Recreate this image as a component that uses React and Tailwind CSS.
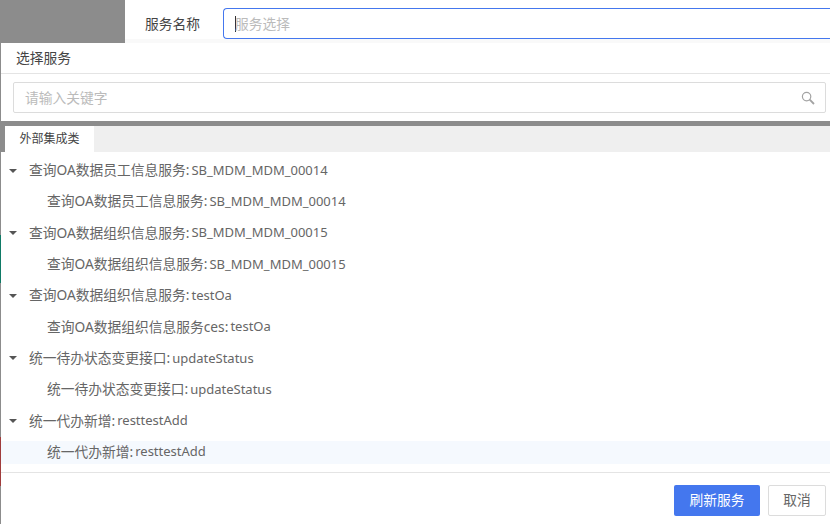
const rows = [
  { name: '查询OA数据员工信息服务:', code: 'SB_MDM_MDM_00014', parent: true },
  { name: '查询OA数据员工信息服务:', code: 'SB_MDM_MDM_00014' },
  { name: '查询OA数据组织信息服务:', code: 'SB_MDM_MDM_00015', parent: true },
  { name: '查询OA数据组织信息服务:', code: 'SB_MDM_MDM_00015' },
  { name: '查询OA数据组织信息服务:', code: 'testOa', parent: true },
  { name: '查询OA数据组织信息服务ces:', code: 'testOa' },
  { name: '统一待办状态变更接口:', code: 'updateStatus', parent: true },
  { name: '统一待办状态变更接口:', code: 'updateStatus' },
  { name: '统一代办新增:', code: 'resttestAdd', parent: true },
  { name: '统一代办新增:', code: 'resttestAdd', active: true },
]

const SearchIcon = () => (
  <svg width="14" height="14" viewBox="0 0 14 14" fill="none" stroke="#a3a3a3" strokeWidth="1.2">
    <circle cx="5.6" cy="5.6" r="4.2" />
    <path d="M8.7 8.7 13 13" strokeWidth="1.8" />
  </svg>
)

const Row = ({ name, code, parent, active }) => (
  <div className={`flex h-[23px] items-center ${parent ? 'pl-[8px]' : 'pl-[46px]'} ${active ? 'bg-[#f5f9fe]' : ''}`}>
    {parent && <span className="mr-[12px] h-0 w-0 border-x-[4px] border-t-[4px] border-x-transparent border-t-[#555]" />}
    <span>{name}</span>
    <span className="ml-[2px] text-[13px]">{code}</span>
  </div>
)

const App = () => {
  return (
    <div className="flex h-[524px] w-[830px] flex-col overflow-hidden bg-white font-['Noto_Sans','Noto_Sans_CJK_SC',sans-serif] text-[13.75px] text-[#666]">
      <div className="flex h-[43px] shrink-0">
        <div className="w-[125px] bg-[#8c8c8c]" />
        <div className="flex flex-1 items-start border-b-[4px] border-[#f9f9f9] bg-white pl-[20px] pt-[8px]">
          <label className="w-[78px] leading-[31px] text-[#444]">服务名称</label>
          <div className="flex h-[31px] flex-1 items-center rounded-l-[4px] border border-r-0 border-[#4477ee] pl-[11px] text-[#bbb]">
            <span className="mr-[-1px] h-[16px] w-px bg-[#333]" />
            <span className="pt-px">服务选择</span>
          </div>
        </div>
      </div>

      <div className="flex flex-1">
        <div className="flex w-px shrink-0 flex-col bg-[#8c8c8c]">
          <div className="mt-[192px] h-[48px] bg-[#0f7a66]" />
          <div className="mt-[154px] h-[49px] bg-[#a03c3c]" />
        </div>

        <div className="flex min-w-0 flex-1 flex-col">
          <div className="flex h-[31px] shrink-0 items-center border-b border-[#e4e4e4] pl-[15px] text-[#444]">选择服务</div>
          <div className="h-[47px] shrink-0 pl-[12px] pr-[4px] pt-[8px]">
            <div className="flex h-[31px] items-center justify-between rounded-[2px] border border-[#dcdcdc] pl-[11px] pr-[10px] text-[#bbb]">
              <span className="pt-px">请输入关键字</span>
              <SearchIcon />
            </div>
          </div>

          <div className="h-[5px] shrink-0 bg-[#8c8c8c]" />

          <div className="flex h-[26px] shrink-0 bg-[#efefef]">
            <div className="w-[4px] bg-[#8c8c8c]" />
            <div className="flex w-[89px] items-center justify-center bg-white text-[12px] text-[#444]">外部集成类</div>
          </div>

          <div className="flex h-[321px] shrink-0 flex-col gap-[8.3px] border-b border-[#e4e4e4] pt-[7px]">
            {rows.map((row, i) => (
              <Row key={i} {...row} />
            ))}
          </div>

          <div className="flex flex-1 justify-end gap-[8px] pr-[4px] pt-[12px]">
            <button className="h-[31px] w-[86px] rounded-[2px] bg-[#4477ee] text-white">刷新服务</button>
            <button className="h-[31px] w-[58px] rounded-[2px] border border-[#dcdcdc] bg-white text-[#666]">取消</button>
          </div>
        </div>
      </div>
    </div>
  )
}

export default App
